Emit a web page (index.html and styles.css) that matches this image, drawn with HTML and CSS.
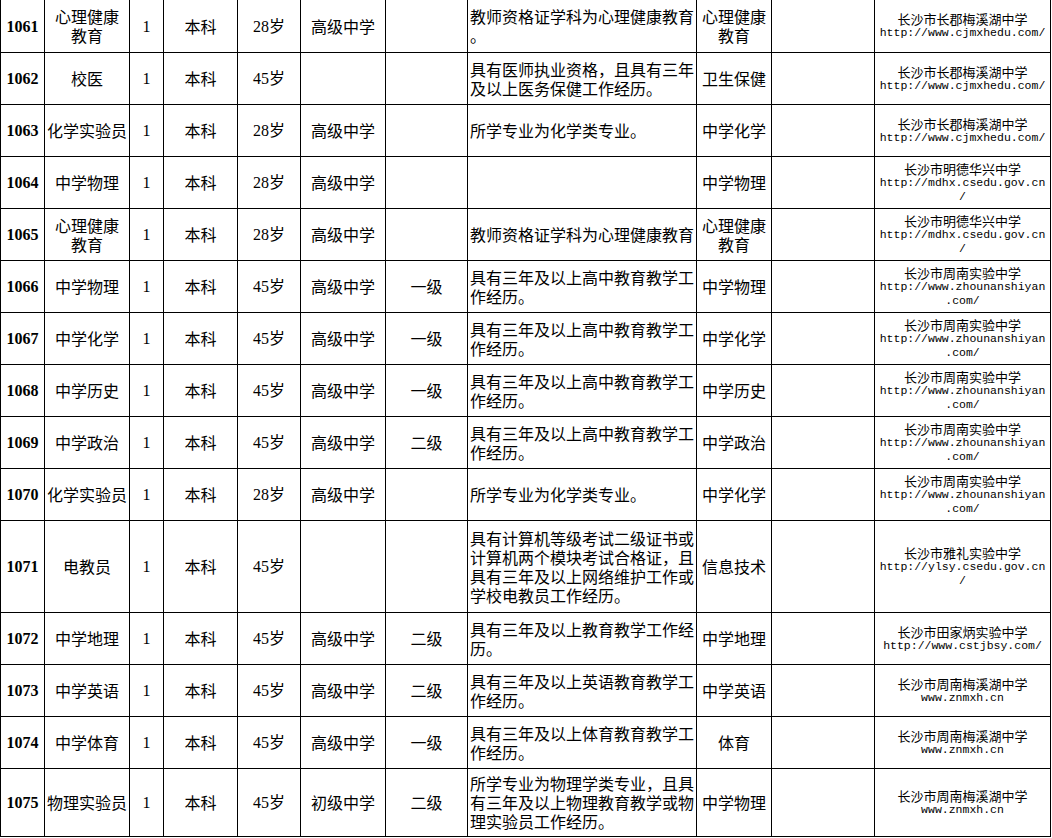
FILE: index.html
```html
<!DOCTYPE html>
<html lang="zh-CN">
<head>
<meta charset="utf-8">
<title>招聘岗位表</title>
<link rel="stylesheet" href="styles.css">
</head>
<body>
<table class="jobs">
  <colgroup>
    <col class="c-id"><col class="c-post"><col class="c-num"><col class="c-edu"><col class="c-age"><col class="c-title"><col class="c-level"><col class="c-req"><col class="c-subj"><col class="c-note"><col class="c-school">
  </colgroup>
  <tbody>
    <tr class="row">
      <td class="id">1061</td><td>心理健康<br>教育</td><td class="num">1</td><td>本科</td><td class="num">28岁</td><td>高级中学</td><td></td>
      <td class="req">教师资格证学科为心理健康教育。</td><td>心理健康教育</td><td></td>
      <td class="school"><div class="name">长沙市长郡梅溪湖中学</div><div class="url">http://www.cjmxhedu.com/</div></td>
    </tr>
    <tr class="row">
      <td class="id">1062</td><td>校医</td><td class="num">1</td><td>本科</td><td class="num">45岁</td><td></td><td></td>
      <td class="req">具有医师执业资格，且具有三年及以上医务保健工作经历。</td><td>卫生保健</td><td></td>
      <td class="school"><div class="name">长沙市长郡梅溪湖中学</div><div class="url">http://www.cjmxhedu.com/</div></td>
    </tr>
    <tr class="row">
      <td class="id">1063</td><td>化学实验员</td><td class="num">1</td><td>本科</td><td class="num">28岁</td><td>高级中学</td><td></td>
      <td class="req">所学专业为化学类专业。</td><td>中学化学</td><td></td>
      <td class="school"><div class="name">长沙市长郡梅溪湖中学</div><div class="url">http://www.cjmxhedu.com/</div></td>
    </tr>
    <tr class="row">
      <td class="id">1064</td><td>中学物理</td><td class="num">1</td><td>本科</td><td class="num">28岁</td><td>高级中学</td><td></td>
      <td class="req"></td><td>中学物理</td><td></td>
      <td class="school"><div class="name">长沙市明德华兴中学</div><div class="url">http://mdhx.csedu.gov.cn/</div></td>
    </tr>
    <tr class="row">
      <td class="id">1065</td><td>心理健康<br>教育</td><td class="num">1</td><td>本科</td><td class="num">28岁</td><td>高级中学</td><td></td>
      <td class="req">教师资格证学科为心理健康教育</td><td>心理健康教育</td><td></td>
      <td class="school"><div class="name">长沙市明德华兴中学</div><div class="url">http://mdhx.csedu.gov.cn/</div></td>
    </tr>
    <tr class="row">
      <td class="id">1066</td><td>中学物理</td><td class="num">1</td><td>本科</td><td class="num">45岁</td><td>高级中学</td><td>一级</td>
      <td class="req">具有三年及以上高中教育教学工作经历。</td><td>中学物理</td><td></td>
      <td class="school"><div class="name">长沙市周南实验中学</div><div class="url">http://www.zhounanshiyan.com/</div></td>
    </tr>
    <tr class="row">
      <td class="id">1067</td><td>中学化学</td><td class="num">1</td><td>本科</td><td class="num">45岁</td><td>高级中学</td><td>一级</td>
      <td class="req">具有三年及以上高中教育教学工作经历。</td><td>中学化学</td><td></td>
      <td class="school"><div class="name">长沙市周南实验中学</div><div class="url">http://www.zhounanshiyan.com/</div></td>
    </tr>
    <tr class="row">
      <td class="id">1068</td><td>中学历史</td><td class="num">1</td><td>本科</td><td class="num">45岁</td><td>高级中学</td><td>一级</td>
      <td class="req">具有三年及以上高中教育教学工作经历。</td><td>中学历史</td><td></td>
      <td class="school"><div class="name">长沙市周南实验中学</div><div class="url">http://www.zhounanshiyan.com/</div></td>
    </tr>
    <tr class="row">
      <td class="id">1069</td><td>中学政治</td><td class="num">1</td><td>本科</td><td class="num">45岁</td><td>高级中学</td><td>二级</td>
      <td class="req">具有三年及以上高中教育教学工作经历。</td><td>中学政治</td><td></td>
      <td class="school"><div class="name">长沙市周南实验中学</div><div class="url">http://www.zhounanshiyan.com/</div></td>
    </tr>
    <tr class="row">
      <td class="id">1070</td><td>化学实验员</td><td class="num">1</td><td>本科</td><td class="num">28岁</td><td>高级中学</td><td></td>
      <td class="req">所学专业为化学类专业。</td><td>中学化学</td><td></td>
      <td class="school"><div class="name">长沙市周南实验中学</div><div class="url">http://www.zhounanshiyan.com/</div></td>
    </tr>
    <tr class="row tall">
      <td class="id">1071</td><td>电教员</td><td class="num">1</td><td>本科</td><td class="num">45岁</td><td></td><td></td>
      <td class="req">具有计算机等级考试二级证书或计算机两个模块考试合格证，且具有三年及以上网络维护工作或学校电教员工作经历。</td><td>信息技术</td><td></td>
      <td class="school"><div class="name">长沙市雅礼实验中学</div><div class="url">http://ylsy.csedu.gov.cn/</div></td>
    </tr>
    <tr class="row">
      <td class="id">1072</td><td>中学地理</td><td class="num">1</td><td>本科</td><td class="num">45岁</td><td>高级中学</td><td>二级</td>
      <td class="req">具有三年及以上教育教学工作经历。</td><td>中学地理</td><td></td>
      <td class="school"><div class="name">长沙市田家炳实验中学</div><div class="url">http://www.cstjbsy.com/</div></td>
    </tr>
    <tr class="row">
      <td class="id">1073</td><td>中学英语</td><td class="num">1</td><td>本科</td><td class="num">45岁</td><td>高级中学</td><td>二级</td>
      <td class="req">具有三年及以上英语教育教学工作经历。</td><td>中学英语</td><td></td>
      <td class="school"><div class="name">长沙市周南梅溪湖中学</div><div class="url">www.znmxh.cn</div></td>
    </tr>
    <tr class="row">
      <td class="id">1074</td><td>中学体育</td><td class="num">1</td><td>本科</td><td class="num">45岁</td><td>高级中学</td><td>一级</td>
      <td class="req">具有三年及以上体育教育教学工作经历。</td><td>体育</td><td></td>
      <td class="school"><div class="name">长沙市周南梅溪湖中学</div><div class="url">www.znmxh.cn</div></td>
    </tr>
    <tr class="row mid">
      <td class="id">1075</td><td>物理实验员</td><td class="num">1</td><td>本科</td><td class="num">45岁</td><td>初级中学</td><td>二级</td>
      <td class="req">所学专业为物理学类专业，且具有三年及以上物理教育教学或物理实验员工作经历。</td><td>中学物理</td><td></td>
      <td class="school"><div class="name">长沙市周南梅溪湖中学</div><div class="url">www.znmxh.cn</div></td>
    </tr>
  </tbody>
</table>
</body>
</html>
```

FILE: styles.css
```css
html, body {
  margin: 0;
  padding: 0;
  background: #fff;
}

.jobs {
  border-collapse: collapse;
  table-layout: fixed;
  width: 1051px;
  margin-top: -1px;
  color: #000;
  font-family: "Noto Sans CJK SC", "Noto Sans", sans-serif;
  font-size: 16px;
  line-height: 19px;
}

.c-id { width: 44px; }
.c-post { width: 85px; }
.c-num { width: 34px; }
.c-edu { width: 74px; }
.c-age { width: 63px; }
.c-title { width: 85px; }
.c-level { width: 82px; }
.c-req { width: 229px; }
.c-subj { width: 75px; }
.c-note { width: 103px; }
.c-school { width: 176px; }

.jobs td {
  border: 1px solid #000;
  padding: 0 2px;
  text-align: center;
  vertical-align: middle;
  overflow: hidden;
}

.row { height: 52px; }
.row:first-child { height: 53px; }
.row.tall { height: 92px; }
.row.mid { height: 68px; }

.jobs td.id {
  font-family: "Liberation Serif", "Noto Sans CJK SC", serif;
  font-weight: bold;
  font-size: 16px;
  padding: 0 1px;
}

.jobs td.num {
  font-family: "Liberation Serif", "Noto Sans CJK SC", serif;
}

.jobs td.req {
  text-align: left;
  line-break: anywhere;
  word-break: break-all;
}

.school .name {
  font-size: 13px;
  line-height: 14px;
}

.school .url {
  font-family: "Liberation Mono", "DejaVu Sans Mono", monospace;
  font-size: 11.5px;
  line-height: 14px;
  line-break: anywhere;
  word-break: break-all;
}
```
